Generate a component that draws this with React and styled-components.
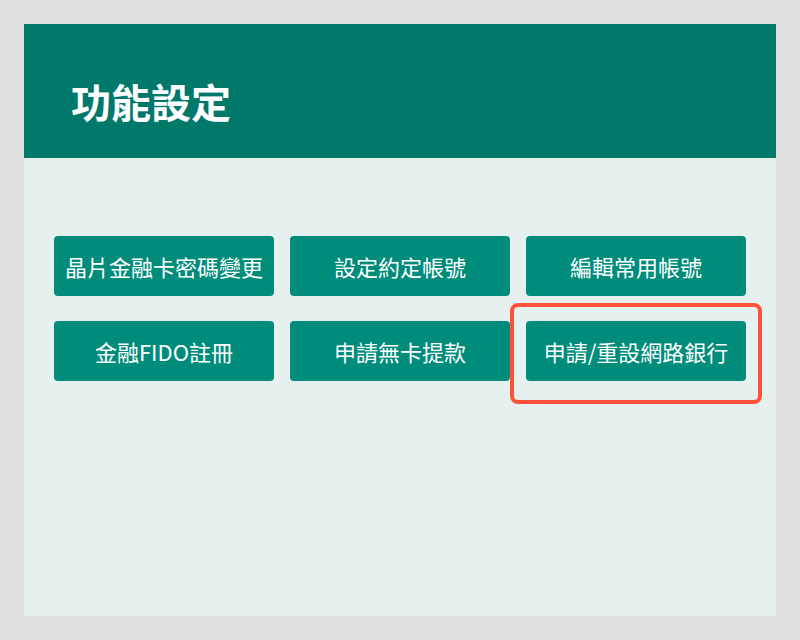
import React from "react";
import styled, { createGlobalStyle } from "styled-components";

const GlobalStyle = createGlobalStyle`
  html, body {
    margin: 0;
    padding: 0;
    background: #dfdfdf;
  }
  body {
    font-family: "Noto Sans CJK TC", "Noto Sans", sans-serif;
  }
`;

const Page = styled.div`
  padding: 24px;
  width: 800px;
  height: 640px;
  box-sizing: border-box;
`;

const Panel = styled.div`
  display: flex;
  flex-direction: column;
  height: 592px;
  background: #e6f0ee;
`;

const Header = styled.header`
  height: 134px;
  display: flex;
  align-items: center;
  padding: 0 0 0 47px;
  background: #00796b;
`;

const Title = styled.h1`
  margin: 0;
  color: #ffffff;
  font-size: 40px;
  font-weight: 700;
  line-height: 1;
  padding-top: 20px;
`;

const Grid = styled.div`
  display: grid;
  grid-template-columns: repeat(3, 220px);
  grid-auto-rows: 60px;
  column-gap: 16px;
  row-gap: 25px;
  padding: 78px 30px 0;
`;

const Cell = styled.div`
  position: relative;
`;

const Button = styled.button`
  width: 100%;
  height: 100%;
  border: none;
  border-radius: 4px;
  background: #008c7b;
  color: #ffffff;
  font-family: "Noto Sans CJK TC", "Noto Sans", sans-serif;
  font-size: 22px;
  font-weight: 400;
  cursor: pointer;
  padding: 0;
`;

const Highlight = styled.div`
  position: absolute;
  left: -16px;
  right: -16px;
  top: -18px;
  bottom: -23px;
  border: 4px solid #ff5238;
  border-radius: 8px;
  pointer-events: none;
`;

const items = [
  "晶片金融卡密碼變更",
  "設定約定帳號",
  "編輯常用帳號",
  "金融FIDO註冊",
  "申請無卡提款",
  "申請/重設網路銀行",
];

export default function App() {
  return (
    <>
      <GlobalStyle />
      <Page>
        <Panel>
          <Header>
            <Title>功能設定</Title>
          </Header>
          <Grid>
            {items.map((label, i) => (
              <Cell key={i}>
                <Button>{label}</Button>
                {i === 5 && <Highlight />}
              </Cell>
            ))}
          </Grid>
        </Panel>
      </Page>
    </>
  );
}
